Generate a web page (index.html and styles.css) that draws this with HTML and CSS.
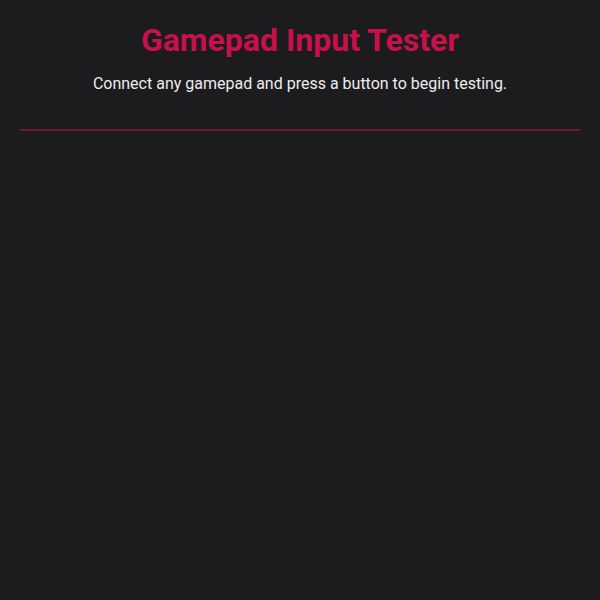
FILE: index.html
```html
<!DOCTYPE html>
<html>
<head>
<meta charset="utf-8">
<link rel="stylesheet" href="styles.css">
</head>
<body>
<div class="page">
  <header class="header">
    <h1 class="title">Gamepad Input Tester</h1>
    <p class="subtitle">Connect any gamepad and press a button to begin testing.</p>
  </header>
  <main class="content"></main>
</div>
</body>
</html>
```
FILE: styles.css
```css
html, body {
  margin: 0;
  padding: 0;
  background: #1c1c1e;
  height: 100%;
}
.page {
  padding: 20px;
  font-family: Roboto, "Liberation Sans", sans-serif;
  color: #ececec;
}
.header {
  text-align: center;
  padding-bottom: 33px;
  border-bottom: 2px solid #6e1a36;
}
.title {
  margin: 0;
  font-size: 32px;
  font-weight: 700;
  color: #c8104a;
  line-height: 40px;
}
.subtitle {
  margin: 12px 0 0;
  font-size: 16px;
  line-height: 24px;
}
```
